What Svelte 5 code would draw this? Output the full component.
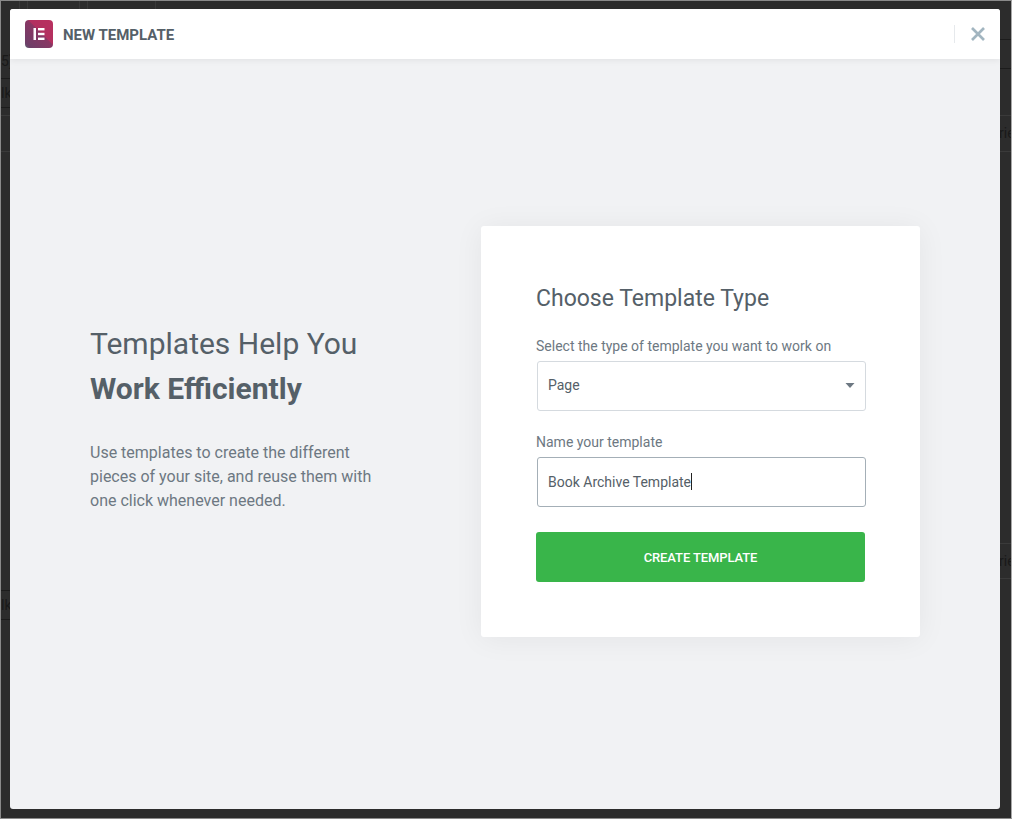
<script lang="ts">
    let templateType = $state("Page");
    let templateName = $state("Book Archive Template");

    // faint page rows showing through behind the dialog
    const backdropLines = [
        { top: 77, side: "left", faint: false },
        { top: 106, side: "left", faint: false },
        { top: 114, side: "left", faint: true },
        { top: 150, side: "left", faint: true },
        { top: 589, side: "left", faint: false },
        { top: 618, side: "left", faint: false },
        { top: 38, side: "right", faint: false },
        { top: 67, side: "right", faint: false },
        { top: 114, side: "right", faint: true },
        { top: 150, side: "right", faint: true },
        { top: 542, side: "right", faint: true },
        { top: 577, side: "right", faint: true }
    ];
    const backdropColumns = [18, 26, 78, 86, 154];
</script>

<div class="screen">
    {#each backdropLines as line}
        <div class="backdrop-line {line.side}" class:faint={line.faint} style="top: {line.top}px"></div>
    {/each}
    {#each backdropColumns as x}
        <div class="backdrop-col" style="left: {x}px"></div>
    {/each}
    <span class="backdrop-text left">5)</span>
    <span class="backdrop-text left second">lk</span>
    <span class="backdrop-text left third">lk</span>
    <span class="backdrop-text right">rie</span>
    <span class="backdrop-text right second">rie</span>

    <div class="dialog">
        <header class="dialog-header">
            <div class="logo">
                <svg width="28" height="28" viewBox="0 0 28 28">
                    <defs>
                        <linearGradient id="logo-grad" x1="0" y1="1" x2="1" y2="0">
                            <stop offset="0" stop-color="#5c6b73" />
                            <stop offset="0.1" stop-color="#6e3f68" />
                            <stop offset="0.55" stop-color="#8a3663" />
                            <stop offset="0.56" stop-color="#b2305f" />
                            <stop offset="1" stop-color="#b9305f" />
                        </linearGradient>
                    </defs>
                    <rect width="28" height="28" rx="4" fill="url(#logo-grad)" />
                    <rect x="8.5" y="8" width="2.5" height="12" fill="#fff" />
                    <rect x="13" y="8" width="6.5" height="2.4" fill="#fff" />
                    <rect x="13" y="12.8" width="6.5" height="2.4" fill="#fff" />
                    <rect x="13" y="17.6" width="6.5" height="2.4" fill="#fff" />
                </svg>
            </div>
            <div class="title">New Template</div>
            <div class="close-wrap">
                <svg width="14" height="14" viewBox="0 0 14 14">
                    <path d="M1 1 L13 13 M13 1 L1 13" stroke="#a2b5c0" stroke-width="2.7" fill="none" />
                </svg>
            </div>
        </header>

        <main class="dialog-body">
            <section class="intro">
                <h2>Templates Help You <strong>Work Efficiently</strong></h2>
                <p>Use templates to create the different pieces of your site, and reuse them with one click whenever needed.</p>
            </section>

            <form class="card" onsubmit={(e) => e.preventDefault()}>
                <h3>Choose Template Type</h3>

                <label for="tpl-type">Select the type of template you want to work on</label>
                <div class="select-box">
                    <span id="tpl-type">{templateType}</span>
                    <svg width="10" height="5" viewBox="0 0 10 5"><path d="M0.5 0 H9.5 L5 5 Z" fill="#6d7882" /></svg>
                </div>

                <label for="tpl-name">Name your template</label>
                <div class="input-box">
                    <span id="tpl-name">{templateName}</span><span class="caret"></span>
                </div>

                <button type="submit">Create Template</button>
            </form>
        </main>
    </div>
</div>

<style>
    :global(body) {
        margin: 0;
        background: #2b2b2b;
        font-family: Roboto, "Liberation Sans", sans-serif;
    }

    .screen {
        position: relative;
        box-sizing: border-box;
        width: 1012px;
        height: 819px;
        padding: 9px 12px 10px 10px;
        overflow: hidden;
        background: #2c2c2c;
        border-top: 1px solid #8a8a8a;
        border-left: 1px solid #8a8a8a;
        border-right: 1px solid #a8a8a8;
        border-bottom: 1px solid #8a8a8a;
    }

    .backdrop-line {
        position: absolute;
        height: 1px;
        background: #1c1c1c;
    }

    .backdrop-line.left {
        left: 0;
        width: 10px;
    }

    .backdrop-line.right {
        left: 999px;
        width: 12px;
    }

    .backdrop-line.faint {
        background: #3a3a3a;
    }

    .backdrop-col {
        position: absolute;
        top: 0;
        width: 1px;
        height: 8px;
        background: #383838;
    }

    .backdrop-text {
        position: absolute;
        overflow: hidden;
        width: 10px;
        font-size: 14px;
        line-height: 16px;
        color: #191919;
    }

    .backdrop-text.left {
        left: 0;
        top: 52px;
    }

    .backdrop-text.left.second {
        top: 84px;
    }

    .backdrop-text.left.third {
        top: 596px;
    }

    .backdrop-text.right {
        left: 998px;
        width: 13px;
        top: 124px;
    }

    .backdrop-text.right.second {
        top: 552px;
    }

    .dialog {
        position: relative;
        display: flex;
        flex-direction: column;
        box-sizing: border-box;
        height: 800px;
        margin: -1px 0 0 -1px;
        width: 990px;
        background: #f1f2f4;
        border-radius: 3px;
        overflow: hidden;
    }

    .dialog-header {
        display: flex;
        align-items: center;
        flex: none;
        box-sizing: border-box;
        height: 50px;
        padding: 0 15px;
        background: #fff;
        box-shadow: 0 2px 6px rgba(0, 0, 0, 0.06);
        z-index: 1;
    }

    .logo {
        display: flex;
        width: 28px;
        height: 28px;
    }

    .title {
        margin: 1px 0 0 10px;
        font-size: 15px;
        font-weight: 700;
        color: #556068;
        text-transform: uppercase;
    }

    .close-wrap {
        display: flex;
        align-items: center;
        height: 18px;
        margin-left: auto;
        padding-left: 16px;
        border-left: 1px solid #e6e9ec;
    }

    .dialog-body {
        display: flex;
        flex: 1;
        align-items: center;
        padding: 0 80px 5px 80px;
    }

    .intro {
        width: 391px;
        flex: none;
        margin-bottom: 30px;
        color: #556068;
    }

    .intro h2 {
        margin: 0;
        width: 290px;
        font-size: 30px;
        font-weight: 400;
        line-height: 45px;
    }

    .intro strong {
        display: block;
        font-weight: 700;
    }

    .intro p {
        margin: 30px 0 0;
        width: 290px;
        font-size: 16px;
        line-height: 24px;
        color: #6d7882;
    }

    .card {
        display: flex;
        flex-direction: column;
        box-sizing: border-box;
        width: 439px;
        height: 411px;
        padding: 55px;
        background: #fff;
        border-radius: 3px;
        box-shadow: 0 2px 30px rgba(0, 0, 0, 0.06);
    }

    .card h3 {
        margin: 0;
        font-size: 23px;
        font-weight: 400;
        line-height: 36px;
        color: #556068;
    }

    label {
        margin-top: 19px;
        font-size: 14px;
        line-height: 20px;
        color: #6d7882;
    }

    .select-box + label {
        margin-top: 21px;
    }

    .select-box,
    .input-box {
        display: flex;
        align-items: center;
        flex: none;
        box-sizing: border-box;
        width: 329px;
        height: 50px;
        margin: 5px 0 0 1px;
        padding: 0 10px;
        font-size: 14px;
        color: #556068;
        background: #fff;
        border: 1px solid #d5dadf;
        border-radius: 3px;
    }

    .select-box {
        justify-content: space-between;
        padding-bottom: 2px;
    }

    .input-box {
        padding-bottom: 1px;
        border-color: #a4afb7;
    }

    .caret {
        width: 1px;
        height: 17px;
        background: #222;
    }

    button {
        flex: none;
        width: 329px;
        height: 50px;
        margin-top: 25px;
        padding: 0;
        border: 0;
        border-radius: 3px;
        background: #39b54a;
        color: #fff;
        font-family: inherit;
        font-size: 13px;
        font-weight: 500;
        letter-spacing: -0.1px;
        text-transform: uppercase;
    }
</style>
